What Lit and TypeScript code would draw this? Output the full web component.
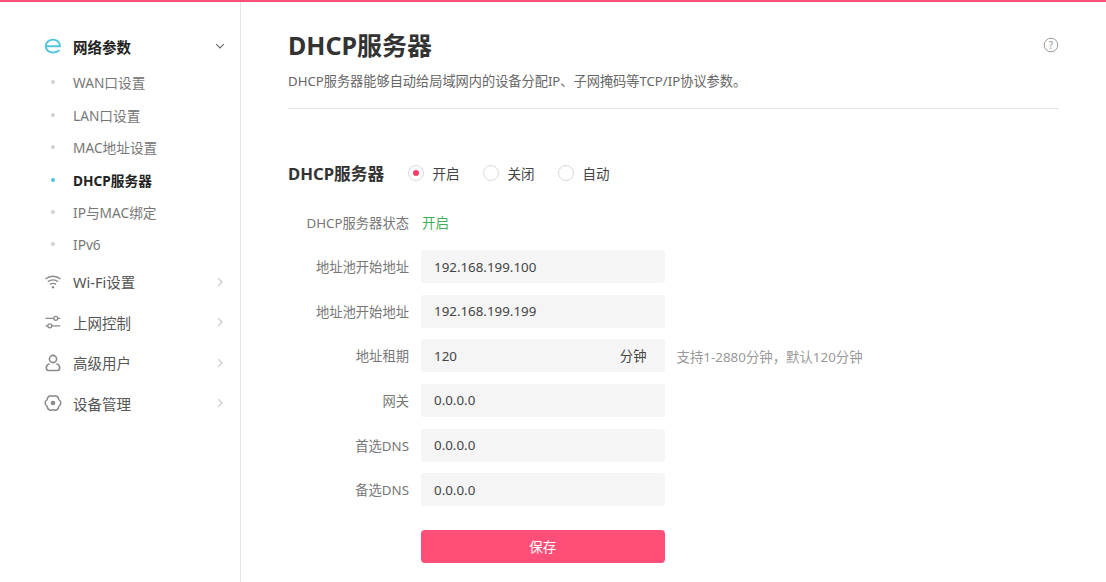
import { LitElement, html, css } from "lit";
import { customElement } from "lit/decorators.js";

const chevR = html`<svg class="chev" viewBox="0 0 10 10"><path d="M3.200 1.200 7 5 3.200 8.800" fill="none" stroke="#c4c4c4" stroke-width="1.100"/></svg>`;
const chevD = html`<svg class="chev" viewBox="0 0 10 10"><path d="M1.200 3.200 5 7 8.800 3.200" fill="none" stroke="#666" stroke-width="1.100"/></svg>`;

const icons = {
  net: html`<svg class="ico" viewBox="0 0 18 18"><path d="M1.700 9.200H16C16 5.300 13 2.600 9.200 2.600 5 2.600 1.700 5.400 1.700 9.100c0 3.700 3.200 6.400 7.500 6.400 2.500 0 4.700-.8 6.400-2.400" fill="none" stroke="#4fc6e0" stroke-width="1.900"/></svg>`,
  wifi: html`<svg class="ico" viewBox="0 0 18 18"><g fill="none" stroke="#8a8a8a" stroke-width="1.300"><path d="M1.500 6C5.800 2.300 12.200 2.300 16.500 6"/><path d="M3.800 8.800C6.800 6.300 11.200 6.300 14.200 8.800"/><path d="M6 11.400C7.800 10.100 10.200 10.100 12 11.400"/></g><circle cx="9" cy="14.200" r="1.200" fill="#8a8a8a"/></svg>`,
  ctrl: html`<svg class="ico" viewBox="0 0 18 18"><g fill="none" stroke="#8a8a8a" stroke-width="1.300"><path d="M1.500 5.300H9.800M13.800 5.300H16.200"/><circle cx="11.800" cy="5.300" r="2"/><path d="M1.500 12.800H3.800M7.800 12.800H16.200"/><circle cx="5.800" cy="12.800" r="2"/></g></svg>`,
  user: html`<svg class="ico" viewBox="0 0 18 18"><g fill="none" stroke="#8a8a8a" stroke-width="1.600"><circle cx="9" cy="5" r="3.600"/><path d="M5.600 9.800C3.400 10.300 2.300 11.900 2.300 13.800 2.300 15.500 3.300 16.500 4.800 16.500H13.200C14.700 16.500 15.700 15.500 15.700 13.800 15.700 11.900 14.600 10.300 12.400 9.800"/></g></svg>`,
  gear: html`<svg class="ico" viewBox="0 0 18 18"><path d="M9 2.300A3.800 3.800 0 0 1 14.800 5.650 3.800 3.800 0 0 1 14.800 12.350 3.800 3.800 0 0 1 9 15.700 3.800 3.800 0 0 1 3.200 12.350 3.800 3.800 0 0 1 3.200 5.650 3.800 3.800 0 0 1 9 2.300Z" fill="none" stroke="#8a8a8a" stroke-width="1.500" stroke-linejoin="round"/><circle cx="9" cy="9" r="2.300" fill="#8a8a8a"/></svg>`,
};

const subs = ["WAN口设置", "LAN口设置", "MAC地址设置", "DHCP服务器", "IP与MAC绑定", "IPv6"];
const groups: [keyof typeof icons, string][] = [["wifi", "Wi-Fi设置"], ["ctrl", "上网控制"], ["user", "高级用户"], ["gear", "设备管理"]];

@customElement("app-root")
export class AppRoot extends LitElement {
  static styles = css`
    :host { display: block; width: 1106px; height: 582px; overflow: hidden; background: #fff; font-family: "Noto Sans", "Noto Sans CJK SC", sans-serif; font-size: 13.500px; color: #666; }
    .top { height: 2px; background: #ff4f78; }
    .wrap { display: flex; height: 580px; }
    .side { width: 240px; border-right: 1px solid #e6e6e6; padding-top: 24px; flex: none; }
    .group { display: flex; align-items: center; height: 40.600px; padding: 0 15px 0 44px; color: #555; font-size: 14.500px; }
    .group.open { color: #222; font-weight: 700; height: 40px; }
    .ico { width: 18px; height: 18px; margin-right: 11px; flex: none; }
    .chev { width: 10px; height: 10px; margin-left: auto; }
    .sub { display: flex; align-items: center; height: 32.400px; padding-left: 73px; position: relative; color: #777; font-size: 13.700px; }
    .sub::before { content: ""; position: absolute; left: 51px; top: 50%; width: 4px; height: 4px; margin-top: -2px; border-radius: 50%; background: #d0d0d0; }
    .sub.active { color: #222; font-weight: 700; }
    .sub.active::before { background: #4fc6e0; }
    .subs { margin: 0.300px 0 0.700px; }
    .main { flex: 1; padding: 0 47px; min-width: 0; }
    .head { position: relative; height: 107px; border-bottom: 1px solid #e6e6e6; box-sizing: border-box; }
    h1 { margin: 0; padding-top: 25px; font-size: 25px; line-height: 36px; font-weight: 700; color: #333; }
    .desc { margin: 8px 0 0; font-size: 13.200px; line-height: 20px; color: #666; }
    .help { position: absolute; right: 0; top: 35px; width: 16px; height: 16px; }
    .mode { display: flex; align-items: center; height: 32px; margin-top: 48px; }
    .mode b { font-size: 16.700px; color: #333; font-weight: 700; width: 120px; }
    .radio { display: flex; align-items: center; width: 75px; color: #444; font-size: 13.500px; }
    .dot { width: 16px; height: 16px; box-sizing: border-box; border: 1px solid #d9d9d9; border-radius: 50%; margin-right: 8.500px; display: flex; align-items: center; justify-content: center; }
    .dot.on::after { content: ""; width: 6px; height: 6px; border-radius: 50%; background: #ff3d6c; }
    .form { display: grid; grid-template-columns: 121px 243.500px auto; column-gap: 12px; grid-auto-rows: 33px; row-gap: 11.600px; margin-top: 16.600px; align-items: center; }
    .label { text-align: right; color: #777; font-size: 13.300px; }
    .status { color: #3fae5a; font-size: 13.500px; padding-left: 1px; }
    .input { display: flex; align-items: center; justify-content: space-between; height: 33px; box-sizing: border-box; padding: 0 18px 0 13px; background: #f5f5f5; border-radius: 3px; color: #444; font-size: 13.350px; }
    .hint { color: #999; font-size: 13.400px; }
    .btn { width: 243.500px; margin: 23.400px 0 0 133px; height: 33px; background: #ff4f78; color: #fff; border-radius: 4px; display: flex; align-items: center; justify-content: center; font-size: 13.500px; }
  `;

  render() {
    return html`<div class="top"></div>
      <div class="wrap">
        <aside class="side">
          <div class="group open">${icons.net}网络参数${chevD}</div>
          <div class="subs">${subs.map((s, i) => html`<div class="sub ${i === 3 ? "active" : ""}">${s}</div>`)}</div>
          ${groups.map(([k, t]) => html`<div class="group">${icons[k]}${t}${chevR}</div>`)}
        </aside>
        <main class="main">
          <div class="head">
            <h1>DHCP服务器</h1>
            <p class="desc">DHCP服务器能够自动给局域网内的设备分配IP、子网掩码等TCP/IP协议参数。</p>
            <svg class="help" viewBox="0 0 16 16"><circle cx="8" cy="8" r="6.800" fill="none" stroke="#999" stroke-width="1"/><text x="8" y="11.500" text-anchor="middle" font-size="10" fill="#999">?</text></svg>
          </div>
          <div class="mode">
            <b>DHCP服务器</b>
            <label class="radio"><span class="dot on"></span>开启</label>
            <label class="radio"><span class="dot"></span>关闭</label>
            <label class="radio"><span class="dot"></span>自动</label>
          </div>
          <div class="form">
            <div class="label">DHCP服务器状态</div><div class="status">开启</div><div></div>
            <div class="label">地址池开始地址</div><div class="input">192.168.199.100</div><div></div>
            <div class="label">地址池开始地址</div><div class="input">192.168.199.199</div><div></div>
            <div class="label">地址租期</div><div class="input"><span>120</span><span>分钟</span></div><div class="hint">支持1-2880分钟，默认120分钟</div>
            <div class="label">网关</div><div class="input">0.0.0.0</div><div></div>
            <div class="label">首选DNS</div><div class="input">0.0.0.0</div><div></div>
            <div class="label">备选DNS</div><div class="input">0.0.0.0</div><div></div>
          </div>
          <div class="btn">保存</div>
        </main>
      </div>`;
  }
}
